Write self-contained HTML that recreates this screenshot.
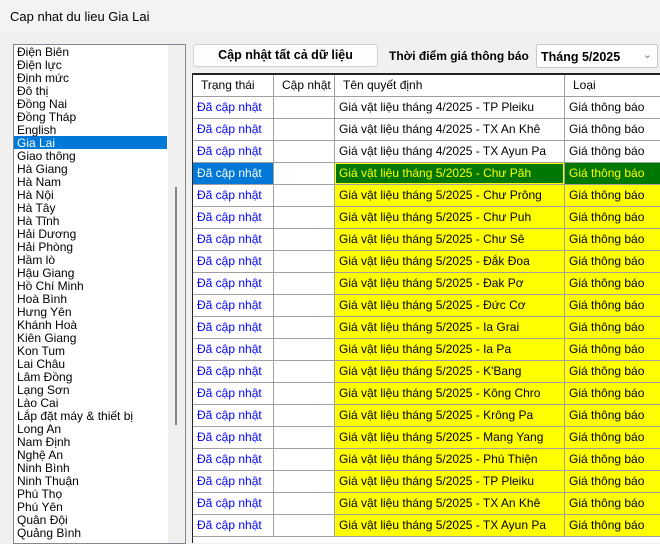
<!DOCTYPE html>
<html><head><meta charset="utf-8"><style>
*{margin:0;padding:0;box-sizing:border-box}
body{width:660px;height:536px;overflow:hidden;background:#f0f0f0;font-family:"Liberation Sans",Arial,sans-serif;font-size:12px;color:#000;position:relative}
.title{position:absolute;left:0;top:0;width:660px;height:32px;background:#f3f3f3;font-size:13px;padding:9px 0 0 10px}
.list{position:absolute;left:13px;top:44px;width:173px;height:500px;background:#fff;border:1px solid #828790;overflow:hidden}
.it{height:13px;line-height:14px;padding-left:3px;font-size:12px;width:153px;white-space:nowrap}
.sel{background:#0078d7;color:#fff}
.sb{position:absolute;left:154px;top:0;width:17px;height:500px;background:#f0f0f0}
.thumb{position:absolute;left:7px;top:142px;width:2px;height:238px;background:#868686}
.btn{position:absolute;left:193px;top:44px;width:185px;height:23px;border:1px solid #d0d0d0;border-radius:3px;background:#fdfdfd;font-weight:bold;font-size:12.5px;text-align:center;line-height:21px}
.lbl{position:absolute;left:389px;top:49px;font-weight:bold;font-size:12px}
.combo{position:absolute;left:536px;top:44px;width:122px;height:24px;border:1px solid #c8c8c8;border-radius:2px;background:#fff;font-weight:bold;font-size:12.5px;padding:5px 0 0 4px}
.combo span{position:absolute;right:5px;top:3px;color:#777;font-weight:normal;font-size:11px}
.grid{position:absolute;left:192px;top:73px;width:470px;height:470px;border-top:2px solid #222;border-left:1px solid #222;background:#fff}
.r{position:absolute;left:0;height:22px;width:470px}
.c{position:absolute;top:0;height:22px;line-height:21px;border-right:1px solid #a0a0a0;border-bottom:1px solid #a0a0a0;padding-left:4px;white-space:nowrap}
.c1{left:0;width:81px;color:#0000ff}
.c2{left:81px;width:61px}
.c3{left:142px;width:230px}
.c4{left:372px;width:100px}
.h .c{color:#000;padding-left:8px}
.y .c3,.y .c4{background:#ffff00}
.g .c1{background:#0078d7;color:#fff}
.g .c3,.g .c4{background:#007800;color:#ffff00}
.g .c3{box-shadow:inset 0 0 0 1px #ffff00}
</style></head><body>
<div class="title">Cap nhat du lieu Gia Lai</div>
<div class="list">
<div class="it">Điện Biên</div><div class="it">Điện lực</div><div class="it">Định mức</div><div class="it">Đô thị</div><div class="it">Đồng Nai</div><div class="it">Đồng Tháp</div><div class="it">English</div><div class="it sel">Gia Lai</div><div class="it">Giao thông</div><div class="it">Hà Giang</div><div class="it">Hà Nam</div><div class="it">Hà Nội</div><div class="it">Hà Tây</div><div class="it">Hà Tĩnh</div><div class="it">Hải Dương</div><div class="it">Hải Phòng</div><div class="it">Hầm lò</div><div class="it">Hậu Giang</div><div class="it">Hồ Chí Minh</div><div class="it">Hoà Bình</div><div class="it">Hưng Yên</div><div class="it">Khánh Hoà</div><div class="it">Kiên Giang</div><div class="it">Kon Tum</div><div class="it">Lai Châu</div><div class="it">Lâm Đồng</div><div class="it">Lạng Sơn</div><div class="it">Lào Cai</div><div class="it">Lắp đặt máy &amp; thiết bị</div><div class="it">Long An</div><div class="it">Nam Định</div><div class="it">Nghệ An</div><div class="it">Ninh Bình</div><div class="it">Ninh Thuận</div><div class="it">Phú Thọ</div><div class="it">Phú Yên</div><div class="it">Quân Đội</div><div class="it">Quảng Bình</div>
<div class="sb"><div class="thumb"></div></div>
</div>
<div class="btn">Cập nhật tất cả dữ liệu</div>
<div class="lbl">Thời điểm giá thông báo</div>
<div class="combo">Tháng 5/2025<span>&#8964;</span></div>
<div class="grid">
<div class="r h" style="top:0"><div class="c c1">Trạng thái</div><div class="c c2">Cập nhật</div><div class="c c3">Tên quyết định</div><div class="c c4">Loại</div></div>
<div class="r" style="top:22px"><div class="c c1">Đã cập nhật</div><div class="c c2"></div><div class="c c3">Giá vật liệu tháng 4/2025 - TP Pleiku</div><div class="c c4">Giá thông báo</div></div>
<div class="r" style="top:44px"><div class="c c1">Đã cập nhật</div><div class="c c2"></div><div class="c c3">Giá vật liệu tháng 4/2025 - TX An Khê</div><div class="c c4">Giá thông báo</div></div>
<div class="r" style="top:66px"><div class="c c1">Đã cập nhật</div><div class="c c2"></div><div class="c c3">Giá vật liệu tháng 4/2025 - TX Ayun Pa</div><div class="c c4">Giá thông báo</div></div>
<div class="r g" style="top:88px"><div class="c c1">Đã cập nhật</div><div class="c c2"></div><div class="c c3">Giá vật liệu tháng 5/2025 - Chư Păh</div><div class="c c4">Giá thông báo</div></div>
<div class="r y" style="top:110px"><div class="c c1">Đã cập nhật</div><div class="c c2"></div><div class="c c3">Giá vật liệu tháng 5/2025 - Chư Prông</div><div class="c c4">Giá thông báo</div></div>
<div class="r y" style="top:132px"><div class="c c1">Đã cập nhật</div><div class="c c2"></div><div class="c c3">Giá vật liệu tháng 5/2025 - Chư Puh</div><div class="c c4">Giá thông báo</div></div>
<div class="r y" style="top:154px"><div class="c c1">Đã cập nhật</div><div class="c c2"></div><div class="c c3">Giá vật liệu tháng 5/2025 - Chư Sê</div><div class="c c4">Giá thông báo</div></div>
<div class="r y" style="top:176px"><div class="c c1">Đã cập nhật</div><div class="c c2"></div><div class="c c3">Giá vật liệu tháng 5/2025 - Đắk Đoa</div><div class="c c4">Giá thông báo</div></div>
<div class="r y" style="top:198px"><div class="c c1">Đã cập nhật</div><div class="c c2"></div><div class="c c3">Giá vật liệu tháng 5/2025 - Đak Pơ</div><div class="c c4">Giá thông báo</div></div>
<div class="r y" style="top:220px"><div class="c c1">Đã cập nhật</div><div class="c c2"></div><div class="c c3">Giá vật liệu tháng 5/2025 - Đức Cơ</div><div class="c c4">Giá thông báo</div></div>
<div class="r y" style="top:242px"><div class="c c1">Đã cập nhật</div><div class="c c2"></div><div class="c c3">Giá vật liệu tháng 5/2025 - Ia Grai</div><div class="c c4">Giá thông báo</div></div>
<div class="r y" style="top:264px"><div class="c c1">Đã cập nhật</div><div class="c c2"></div><div class="c c3">Giá vật liệu tháng 5/2025 - Ia Pa</div><div class="c c4">Giá thông báo</div></div>
<div class="r y" style="top:286px"><div class="c c1">Đã cập nhật</div><div class="c c2"></div><div class="c c3">Giá vật liệu tháng 5/2025 - K'Bang</div><div class="c c4">Giá thông báo</div></div>
<div class="r y" style="top:308px"><div class="c c1">Đã cập nhật</div><div class="c c2"></div><div class="c c3">Giá vật liệu tháng 5/2025 - Kông Chro</div><div class="c c4">Giá thông báo</div></div>
<div class="r y" style="top:330px"><div class="c c1">Đã cập nhật</div><div class="c c2"></div><div class="c c3">Giá vật liệu tháng 5/2025 - Krông Pa</div><div class="c c4">Giá thông báo</div></div>
<div class="r y" style="top:352px"><div class="c c1">Đã cập nhật</div><div class="c c2"></div><div class="c c3">Giá vật liệu tháng 5/2025 - Mang Yang</div><div class="c c4">Giá thông báo</div></div>
<div class="r y" style="top:374px"><div class="c c1">Đã cập nhật</div><div class="c c2"></div><div class="c c3">Giá vật liệu tháng 5/2025 - Phú Thiện</div><div class="c c4">Giá thông báo</div></div>
<div class="r y" style="top:396px"><div class="c c1">Đã cập nhật</div><div class="c c2"></div><div class="c c3">Giá vật liệu tháng 5/2025 - TP Pleiku</div><div class="c c4">Giá thông báo</div></div>
<div class="r y" style="top:418px"><div class="c c1">Đã cập nhật</div><div class="c c2"></div><div class="c c3">Giá vật liệu tháng 5/2025 - TX An Khê</div><div class="c c4">Giá thông báo</div></div>
<div class="r y" style="top:440px"><div class="c c1">Đã cập nhật</div><div class="c c2"></div><div class="c c3">Giá vật liệu tháng 5/2025 - TX Ayun Pa</div><div class="c c4">Giá thông báo</div></div>
</div>
</body></html>
